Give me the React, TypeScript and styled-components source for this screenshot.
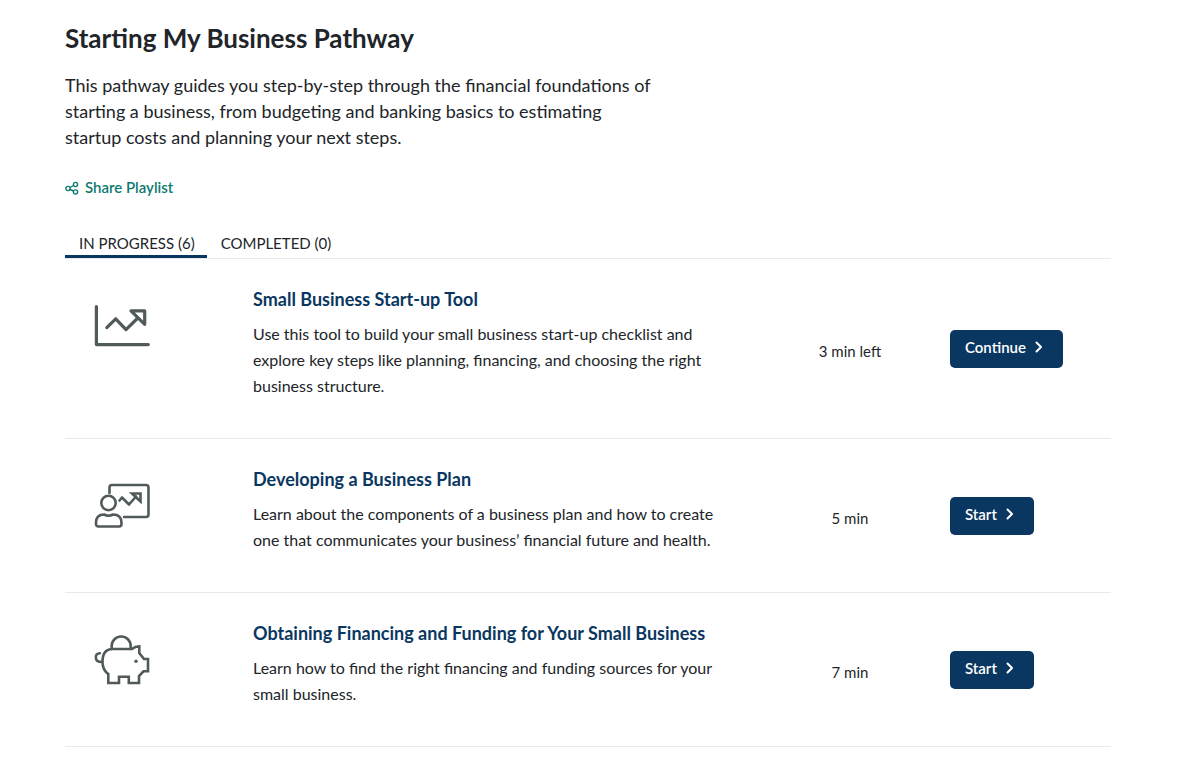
import React from "react";
import styled, { createGlobalStyle } from "styled-components";

const GlobalStyle = createGlobalStyle`
  *, *::before, *::after { box-sizing: border-box; }
  body {
    margin: 0;
    background: #fff;
    color: #212529;
    font-family: Lato, "Liberation Sans", sans-serif;
  }
`;

const Page = styled.main`
  padding: 20px 89px 0 65px;
`;

const Title = styled.h1`
  margin: 0;
  font-size: 26px;
  line-height: 36px;
  font-weight: 700;
`;

const Intro = styled.p`
  margin: 16px 0 0;
  max-width: 592px;
  font-size: 18px;
  line-height: 26px;
`;

const ShareLink = styled.a`
  display: inline-flex;
  align-items: center;
  gap: 6px;
  margin-top: 25px;
  font-size: 15px;
  line-height: 24px;
  font-weight: 600;
  color: #0d7a6f;
  text-decoration: none;
  svg { margin-top: 2px; }
`;

const Tabs = styled.div`
  display: flex;
  margin-top: 32px;
  border-bottom: 1px solid #e6ebef;
`;

const Tab = styled.button<{ $active?: boolean }>`
  padding: 0 12px 0 14px;
  height: 27px;
  border: 0;
  border-bottom: 3px solid ${(p) => (p.$active ? "#0a3761" : "transparent")};
  background: none;
  color: inherit;
  font: inherit;
  font-size: 15px;
  line-height: 24px;
  cursor: pointer;
`;

const List = styled.ul`
  margin: 0;
  padding: 0;
  list-style: none;
`;

const Row = styled.li`
  display: grid;
  grid-template-columns: 188px minmax(0, 1fr) 200px 161px;
  align-items: center;
  border-bottom: 1px solid #e6ebef;
`;

const IconCell = styled.div`
  align-self: start;
  padding: 37px 0 0 28px;
  svg { display: block; }
`;

const Body = styled.div`
  padding: 26px 16px 39px 0;
`;

const ItemTitle = styled.h2`
  margin: 0 0 8px;
  font-size: 18px;
  line-height: 28px;
  font-weight: 700;
  color: #0a3761;
`;

const ItemText = styled.p`
  margin: 0;
  font-size: 16px;
  line-height: 26px;
`;

const Duration = styled.span`
  padding-top: 4px;
  text-align: center;
  font-size: 15px;
  line-height: 24px;
`;

const Action = styled.button`
  display: inline-flex;
  align-items: center;
  justify-self: start;
  gap: 8px;
  height: 38px;
  padding: 0 18px 4px 15px;
  border: 0;
  border-radius: 5px;
  background: #0a3761;
  color: #fff;
  font: inherit;
  font-size: 15px;
  line-height: 24px;
  font-weight: 600;
  cursor: pointer;
`;

const Glyph = ({ children }: { children: React.ReactNode }) => (
  <svg width="60" height="60" viewBox="0 0 60 60" fill="none" stroke="#515a5b" strokeWidth="3.2" strokeLinecap="round" strokeLinejoin="round" aria-hidden="true">
    {children}
  </svg>
);

const ChartIcon = () => (
  <Glyph>
    <path d="M3.4 10.5V48.6H55.3" />
    <path d="M13.8 31.6L22.7 22.8L33 33.6L44.3 22.5" />
    <path d="M38 14.8H51.7V28.3Z" />
  </Glyph>
);

const PlanIcon = () => (
  <Glyph>
    <g strokeWidth="2.6">
      <path d="M16.500 17V11.500Q16.500 9 19 9H53Q55.500 9 55.500 11.500V38.500Q55.500 41 53 41H31" />
      <circle cx="15.500" cy="27" r="7.200" />
      <path d="M3 47Q3 38.500 11 38.500Q15.500 41 20 38.500Q28.500 38.500 28.500 47V48Q28.500 50.500 26 50.500H5.500Q3 50.500 3 48Z" />
      <path d="M26.500 24.500L29 21.500L36 28.500L43 20.500" />
      <path d="M39 17.500H47.500V25.500Z" strokeLinejoin="miter" />
    </g>
  </Glyph>
);

const PiggyIcon = () => (
  <Glyph>
    <g strokeWidth="2.6" strokeLinejoin="miter">
      <path d="M19.500 19H39Q42 16.500 46.300 16.300V23L51 29H55V41.300H50.500L46 46V53H35.800V46.800H26V53H15.300V44Q9.500 40 9.500 32Q9.500 19 19.500 19Z" />
      <path d="M18.700 19V16A9.500 9.500 0 0 1 37.700 16V19" />
      <path d="M8.800 32Q2.800 32 2.800 27.500Q2.800 23.500 6.800 23.300" />
      <circle cx="43" cy="31.300" r="1.700" fill="#515a5b" stroke="none" />
    </g>
  </Glyph>
);

const ShareIcon = () => (
  <svg width="14" height="14" viewBox="0 0 14 14" fill="none" stroke="currentColor" strokeWidth="1.400" aria-hidden="true">
    <circle cx="3" cy="7.500" r="2.100" />
    <circle cx="10.500" cy="3.500" r="2.100" />
    <circle cx="10.500" cy="11" r="2.100" />
    <path d="M4.900 6.500L8.600 4.500M4.900 8.500L8.600 10" />
  </svg>
);

const Chevron = () => (
  <svg width="11" height="14" viewBox="0 0 11 14" fill="none" stroke="currentColor" strokeWidth="2" strokeLinecap="round" strokeLinejoin="round" aria-hidden="true">
    <path d="M2.500 2.500L7 7L2.500 11.500" />
  </svg>
);

const items = [
  {
    icon: <ChartIcon />,
    title: "Small Business Start-up Tool",
    text: "Use this tool to build your small business start-up checklist and explore key steps like planning, financing, and choosing the right business structure.",
    time: "3 min left",
    action: "Continue",
  },
  {
    icon: <PlanIcon />,
    title: "Developing a Business Plan",
    text: "Learn about the components of a business plan and how to create one that communicates your business’ financial future and health.",
    time: "5 min",
    action: "Start",
  },
  {
    icon: <PiggyIcon />,
    title: "Obtaining Financing and Funding for Your Small Business",
    text: "Learn how to find the right financing and funding sources for your small business.",
    time: "7 min",
    action: "Start",
  },
];

export default function App() {
  return (
    <Page>
      <GlobalStyle />
      <Title>Starting My Business Pathway</Title>
      <Intro>
        This pathway guides you step-by-step through the financial foundations of starting a
        business, from budgeting and banking basics to estimating startup costs and planning your
        next steps.
      </Intro>
      <ShareLink href="#share">
        <ShareIcon />
        Share Playlist
      </ShareLink>
      <Tabs role="tablist">
        <Tab type="button" role="tab" aria-selected="true" $active>IN PROGRESS (6)</Tab>
        <Tab type="button" role="tab" aria-selected="false">COMPLETED (0)</Tab>
      </Tabs>
      <List>
        {items.map((item) => (
          <Row key={item.title}>
            <IconCell>{item.icon}</IconCell>
            <Body>
              <ItemTitle>{item.title}</ItemTitle>
              <ItemText>{item.text}</ItemText>
            </Body>
            <Duration>{item.time}</Duration>
            <Action type="button">
              {item.action}
              <Chevron />
            </Action>
          </Row>
        ))}
      </List>
    </Page>
  );
}
